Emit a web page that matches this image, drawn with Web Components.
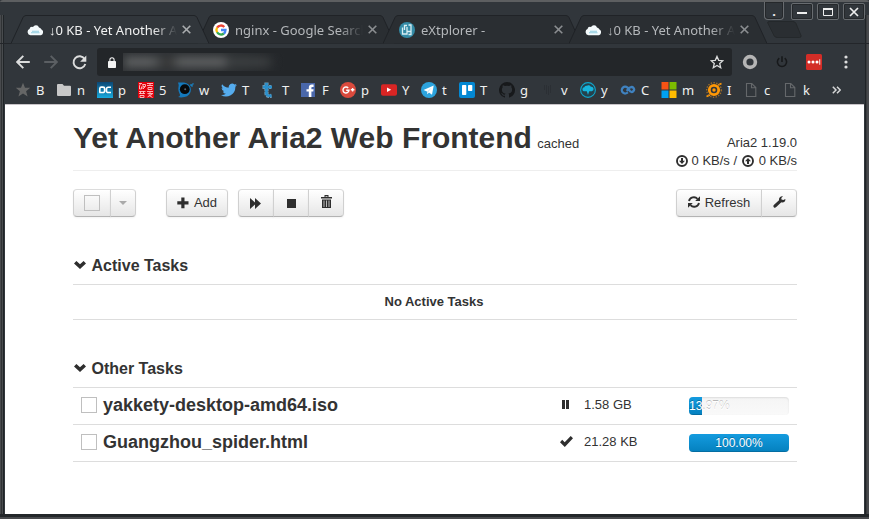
<!DOCTYPE html>
<html lang="en"><head><meta charset="utf-8"><title>Yet Another Aria2 Web Frontend</title>
<style>
html,body{margin:0;width:869px;height:519px;overflow:hidden;background:#31363b}
</style></head><body>
<browser-window></browser-window>
<script>
const G = {
 cloud:`<svg width="16" height="16" viewBox="0 0 16 16"><path d="M3.500 13.200a3.200 3.200 0 0 1-1-6.100A2.800 2.800 0 0 1 6 4.900 3.400 3.400 0 0 1 12 5.400a3.400 3.400 0 0 1 2.500 2 3.200 3.200 0 0 1-.6 5.800z" fill="#f4fafc"/><path d="M4 10.800h8.500M5 9.300h7" stroke="#8fcde0" stroke-width="1.100"/></svg>`,
 google:`<svg width="16" height="16" viewBox="0 0 16 16"><circle cx="8" cy="8" r="8" fill="#fff"/><g fill="none" stroke-width="2.300"><path d="M4.100 5.700A4.500 4.500 0 0 1 11.300 5" stroke="#ea4335"/><path d="M4.100 5.700a4.500 4.500 0 0 0 0 4.600" stroke="#fbbc05"/><path d="M4.100 10.300a4.500 4.500 0 0 0 6.800 1.200" stroke="#34a853"/><path d="M8 8h4.500a4.500 4.500 0 0 1-1.700 3.600" stroke="#4285f4"/></g></svg>`,
 ext:`<svg width="16" height="16" viewBox="0 0 16 16"><circle cx="8" cy="8" r="8" fill="#348ba6"/><path d="M3.500 5.500V12h4.500V9.500M5.500 8V3.500H8M8 5v4.500h4M9.500 3h2.500v9.500H9.500" fill="none" stroke="#d8eef3" stroke-width="1.300"/></svg>`,
 close:`<svg width="9" height="9" viewBox="0 0 9 9"><path d="M.7.7l7.600 7.600M8.300.7L.7 8.300" stroke="currentColor" stroke-width="1.600"/></svg>`,
 back:`<svg width="14" height="14" viewBox="0 0 14 14" fill="none" stroke="#dcdddd" stroke-width="1.900"><path d="M13.800 7H1.500M7.300.8L1.200 7l6.100 6.200"/></svg>`,
 fwd:`<svg width="14" height="14" viewBox="0 0 14 14" fill="none" stroke="#5b5f63" stroke-width="1.900"><path d="M.2 7h12.300M6.700.8L12.800 7l-6.100 6.200"/></svg>`,
 reload:`<svg width="15" height="15" viewBox="0 0 15 15"><path d="M12.600 4A6 6 0 1 0 13.300 9" fill="none" stroke="#dcdddd" stroke-width="1.900"/><path d="M14.300.6v6.200H8.100z" fill="#dcdddd"/></svg>`,
 lock:`<svg width="8" height="11" viewBox="0 0 8 11"><rect y="4" width="8" height="7" rx=".8" fill="#f3f3f3"/><path d="M1.900 4.500V2.800a2.100 2.100 0 0 1 4.200 0v1.700" fill="none" stroke="#f3f3f3" stroke-width="1.100"/></svg>`,
 starline:`<svg width="14" height="14" viewBox="0 0 14 14"><path d="M7 1.400l1.700 3.900 4.200.4-3.200 2.800 1 4.200L7 10.500l-3.700 2.200 1-4.200L1.100 5.700l4.200-.4z" fill="none" stroke="#dcdddd" stroke-width="1.300"/></svg>`,
 ring:`<svg width="16" height="16" viewBox="0 0 16 16"><circle cx="8" cy="8" r="5.400" fill="none" stroke="#b5b5b5" stroke-width="3.600"/></svg>`,
 power:`<svg width="12" height="12" viewBox="0 0 12 12" fill="none" stroke="#17191b" stroke-width="1.600"><path d="M3.300 2.200a4.600 4.600 0 1 0 5.400 0M6 .3V6"/></svg>`,
 lastpass:`<svg width="16" height="16" viewBox="0 0 16 16"><rect width="16" height="16" rx="1.500" fill="#d32d27"/><g fill="#fff"><circle cx="3" cy="8" r="1.500"/><circle cx="7" cy="8" r="1.500"/><circle cx="11" cy="8" r="1.500"/><path d="M13.300 5.300h.9v5.400h-.9z"/></g></svg>`,
 dots:`<svg width="4" height="14" viewBox="0 0 4 14" fill="#dcdddd"><circle cx="2" cy="2" r="1.600"/><circle cx="2" cy="7" r="1.600"/><circle cx="2" cy="12" r="1.600"/></svg>`,
 bstar:`<svg width="16" height="16" viewBox="0 0 16 16"><path d="M8 .7l2 5h5.200l-4.100 3.500 1.500 5.300L8 11.400l-4.600 3.100 1.500-5.300L.8 5.700H6z" fill="#656666"/></svg>`,
 folder:`<svg width="16" height="16" viewBox="0 0 16 16"><path d="M2 2h4.500L8 3.700h6a1 1 0 0 1 1 1V13a1 1 0 0 1-1 1H2a1 1 0 0 1-1-1V3a1 1 0 0 1 1-1z" fill="#c8c8c8"/></svg>`,
 pc:`<svg width="16" height="16" viewBox="0 0 16 16"><defs><linearGradient id="a" x2="0" y2="1"><stop stop-color="#0b4774"/><stop offset="1" stop-color="#18a9dc"/></linearGradient></defs><path d="M0 0h16v16H0z" fill="url(#a)"/><path d="M2.800 10.500V6.500a1.500 1.500 0 0 1 1.500-1.400H6a1.600 1.600 0 0 1 1.600 1.600V9A1.500 1.500 0 0 1 6 10.500H2.300M14 5.300h-2.900A1.600 1.600 0 0 0 9.500 7v2a1.500 1.500 0 0 0 1.600 1.500H14" fill="none" stroke="#fff" stroke-width="1.600"/></svg>`,
 seal:`<svg width="16" height="16" viewBox="0 0 16 16"><path d="M0 0h16v16H0z" fill="#e2000b"/><path d="M1 1.500h3M2.500 1.500L1.500 4v3h2V4.500M5 2v5M4.500 2.500h3v2h-2.500M7 5L5 7M9 1.500h6M9 3.500h6M12 1v2.500M10 5.500h4v2h-4zM1 9.500h6.500M2.500 9v3M5.500 9v3M1 11.500h6M2 13.500h4v2H2zM9 9.500h6M9.500 11.500h5.500M12 10v3M9.500 15l5-3M10.500 13l4 2.500" fill="none" stroke="#ffc4c4" stroke-width=".9"/></svg>`,
 eye0:`<svg width="16" height="16" viewBox="0 0 16 16"><path d="M0 .5h6A7.500 7.300 0 0 1 6.500 15q-3.500.8-6.500 0 3-1 1.500-3.500Q.3 9.500.3 7 1.500 3 0 .5z" fill="#1479bd"/><circle cx="6.800" cy="7.200" r="4.900" fill="#07090b"/><circle cx="7.200" cy="7.200" r="1" fill="#57616b"/><path d="M12.200 3h1.800v1.800M15 1.300v1.200" stroke="#1686cc" stroke-width="1.300" fill="none"/></svg>`,
 twitter:`<svg width="16" height="16" viewBox="0 0 24 24"><path d="M24 4.600a10 10 0 0 1-2.800.8 5 5 0 0 0 2.100-2.700 10 10 0 0 1-3.100 1.200 4.900 4.900 0 0 0-8.400 4.500A14 14 0 0 1 1.700 3.200a4.900 4.900 0 0 0 1.500 6.500 5 5 0 0 1-2.200-.6v.1a4.900 4.900 0 0 0 3.900 4.800 5 5 0 0 1-2.200.1 4.900 4.900 0 0 0 4.600 3.400A10 10 0 0 1 0 19.500 14 14 0 0 0 21.500 7z" fill="#55acee"/></svg>`,
 tt:`<svg width="16" height="16" viewBox="0 0 16 16"><path d="M5.500.5v11q0 3.200 5 2.300M1.500 5h9.500" fill="none" stroke="#6f9db8" stroke-width="4.200" stroke-dasharray="2.500 .7"/><path d="M5.500 1v10.500q0 2.800 5 2M2 5h9" fill="none" stroke="#2a8fcb" stroke-width="2.600"/></svg>`,
 fb:`<svg width="16" height="16" viewBox="0 0 16 16"><rect x="0" y="1" width="14" height="14" fill="#4967aa"/><path d="M7.800 15V9.500H5.500V7.200h2.300V5.900c0-2.200 1.200-3.300 3.100-3.300h1.700v2.300h-1.200c-.8 0-1 .4-1 1v1.300h2.200l-.3 2.300h-1.900V15z" fill="#fff"/></svg>`,
 gplus:`<svg width="16" height="16" viewBox="0 0 16 16"><circle cx="8" cy="8" r="8" fill="#da4a3d"/><path d="M8.200 5.900A3 3 0 1 0 9 8.200H6.200M10.800 7.700h3.600M12.600 5.900v3.600" fill="none" stroke="#fff" stroke-width="1.400"/></svg>`,
 yt:`<svg width="16" height="16" viewBox="0 0 16 16"><rect y="2.200" width="16" height="11.500" rx="2" fill="#d92524"/><path d="M6 5.500v4.600l4.200-2.300z" fill="#fff"/></svg>`,
 tg:`<svg width="16" height="16" viewBox="0 0 16 16"><circle cx="8" cy="8" r="8" fill="#2ca3dd"/><path d="M2.500 8L12.700 3.600 11 12.700 8 10.500l-1.700 1.800L6 9.500z" fill="#fff"/><path d="M6.200 9.400l4.300-3.700-3.200 4.200-1 2.300z" fill="#bcdff1"/></svg>`,
 trello:`<svg width="16" height="16" viewBox="0 0 16 16"><rect width="16" height="16" rx="2" fill="#0388d3"/><rect x="3" y="3" width="4.300" height="10" rx=".7" fill="#fff"/><rect x="9" y="3" width="4.300" height="6" rx=".7" fill="#fff"/></svg>`,
 gh:`<svg width="16" height="16" viewBox="0 0 16 16"><path d="M8 0a8 8 0 0 0-2.500 15.600c.4.100.5-.2.500-.4v-1.500c-2.200.5-2.700-1-2.700-1-.4-.9-.9-1.200-.9-1.200-.7-.5.100-.5.100-.5.800.1 1.200.8 1.200.8.700 1.300 1.900.9 2.300.7.100-.5.300-.9.500-1.100-1.800-.2-3.600-.9-3.600-4 0-.9.300-1.600.8-2.100-.1-.2-.4-1 .1-2.100 0 0 .7-.2 2.200.8a8 8 0 0 1 4 0c1.500-1 2.200-.8 2.200-.8.400 1.100.2 1.900.1 2.100.5.500.8 1.300.8 2.100 0 3.100-1.900 3.700-3.700 3.900.3.300.6.800.6 1.500v2.400c0 .2.100.5.500.4A8 8 0 0 0 8 0z" fill="#17191b"/></svg>`,
 vline:`<svg width="16" height="16" viewBox="0 0 16 16"><path d="M4.500 3v5M6.500 3v9M8.500 4v9M10.500 3v8" stroke="#2b2f34"/></svg>`,
 ycloud:`<svg width="16" height="16" viewBox="0 0 16 16"><circle cx="8" cy="8" r="7.400" fill="#24424d" stroke="#10a5cb" stroke-width="1.100"/><path d="M4.500 9.300a2 2 0 0 1-.2-4 2 2 0 0 1 2.500-1.500 2.600 2.600 0 0 1 4 1 2.300 2.300 0 0 1 1 4.500H9.200L8 13 6.800 9.300z" fill="#17b5dd"/></svg>`,
 inf:`<svg width="16" height="16" viewBox="0 0 16 16"><path d="M7.800 10.300A3.400 3.400 0 1 1 7.300 5.400L10.200 9.400a2.400 2.400 0 1 0 .2-4Q9.200 5.400 6.800 9" fill="none" stroke="#3f82c0" stroke-width="2.300"/></svg>`,
 ms:`<svg width="16" height="16" viewBox="0 0 16 16"><path d="M.5 0h7v7.500h-7z" fill="#f65314"/><path d="M8.500 0h7v7.500h-7z" fill="#7cbb00"/><path d="M.5 8.500h7V16h-7z" fill="#00a1f1"/><path d="M8.500 8.500h7V16h-7z" fill="#ffbb00"/></svg>`,
 eye:`<svg width="16" height="16" viewBox="0 0 16 16"><circle cx="8" cy="8" r="4.700" fill="none" stroke="#ff9806" stroke-width="2.800"/><circle cx="8" cy="8" r="1.700" fill="#ff9806"/><path d="M12 3l3.500-1.500M4 13L.5 14.500" stroke="#ff9806" stroke-width="1.800"/><circle cx="8" cy="8" r="7.300" fill="none" stroke="#a36f29" stroke-width="1.300" stroke-dasharray="1.400 1.400"/></svg>`,
 doc:`<svg width="16" height="16" viewBox="0 0 16 16"><path d="M3.500 1.500h5.300l4 4v9H3.500zM8.500 1.800v4h4" fill="none" stroke="#65686b" stroke-width="1.100"/></svg>`,
 more:`<svg width="9" height="8" viewBox="0 0 9 8"><path d="M.8.8L4 4 .8 7.200M5 .8L8.200 4 5 7.200" fill="none" stroke="#d5d6d7" stroke-width="1.500"/></svg>`,
 chev:`<svg width="12" height="8" viewBox="0 0 12 8"><path d="M0 2.600L2.400.1 6 3.200 9.600.1 12 2.600 6 8z" fill="#2e2e2e"/></svg>`,
 plus:`<svg width="12" height="12" viewBox="0 0 12 12"><path d="M4.300.5h3.200v3.700h4v3.200h-4v3.900H4.300V7.400h-4V4.200h4z" fill="#2e2e2e"/></svg>`,
 ff:`<svg width="11" height="11" viewBox="0 0 11 11"><path d="M0 0l5 4.400V0l6 5.500L5 11V6.600L0 11z" fill="#2e2e2e"/></svg>`,
 stop:`<svg width="9" height="9" viewBox="0 0 9 9"><path d="M0 0h9v9H0z" fill="#2e2e2e"/></svg>`,
 trash:`<svg width="11" height="13" viewBox="0 0 11 13"><path d="M0 2h3.500V0h4v2H11v1.500H0zM1 4.500h9V13H1z" fill="#2e2e2e"/><path d="M4.500 1h2v1h-2zM2.500 5.500h1V12h-1zM5 5.500h1V12H5zM7.500 5.500h1V12h-1z" fill="#bbb"/></svg>`,
 refresh:`<svg width="12" height="12" viewBox="0 0 12 12"><g fill="none" stroke="#2e2e2e" stroke-width="1.900"><path d="M1 5A5 5 0 0 1 9.500 2.800M11 7a5 5 0 0 1-8.500 2.200"/></g><path d="M12 .3V5H7.200zM0 11.700V7h4.800z" fill="#2e2e2e"/></svg>`,
 wrench:`<svg width="13" height="12" viewBox="0 0 13 12"><path d="M12.300 3.100c.5 2.300-1.700 4-4 3.200L3 11.200c-1.500 1.300-3.500-.6-2.200-2.100L6 4.300C5.600 1.800 7.700-.2 10 .3L8.300 2l.2 1.600 1.900.4z" fill="#2e2e2e"/></svg>`,
 down:`<svg width="12" height="12" viewBox="0 0 12 12"><circle cx="6" cy="6" r="5" fill="none" stroke="#2e2e2e" stroke-width="1.900"/><path d="M5 3h2v2.700h2L6 9 3 5.700h2z" fill="#2e2e2e"/></svg>`,
 up:`<svg width="12" height="12" viewBox="0 0 12 12"><circle cx="6" cy="6" r="5" fill="none" stroke="#2e2e2e" stroke-width="1.900"/><path d="M5 9h2V6.300h2L6 3 3 6.300h2z" fill="#2e2e2e"/></svg>`,
 pause:`<svg width="7" height="9" viewBox="0 0 7 9"><path d="M0 0h3v9H0zM4 0h3v9H4z" fill="#2e2e2e"/></svg>`,
 check:`<svg width="13" height="11" viewBox="0 0 13 11"><path d="M0 6.200l2.200-2.400 2.500 2.400L10.700 0 13 2.200 4.800 11z" fill="#2e2e2e"/></svg>`,
 min:`<svg width="22" height="16" viewBox="0 0 22 16"><path d="M6 9h10" stroke="#eee" stroke-width="2"/></svg>`,
 max:`<svg width="22" height="16" viewBox="0 0 22 16"><path d="M6.500 4.500h9v7h-9z" fill="none" stroke="#eee"/><path d="M6 5h10" stroke="#eee" stroke-width="2"/></svg>`,
 x:`<svg width="22" height="16" viewBox="0 0 22 16"><path d="M7 4l8 8M15 4l-8 8" stroke="#eee" stroke-width="1.700"/></svg>`
};
function def(name, fn){
  customElements.define(name, class extends HTMLElement{
    connectedCallback(){ if(!this.shadowRoot) this.attachShadow({mode:'open'}).innerHTML = fn(this); }
  });
}
const A=(e,n,d='')=>e.getAttribute(n)??d;

def('ui-icon', e=>`<style>:host{display:inline-flex;flex:none}svg{display:block}</style>${G[A(e,'name')]}`);

def('browser-tab', e=>{
  const act=e.hasAttribute('active');
  return `<style>
  :host{display:grid;width:198px;height:29px;margin-right:-12px;flex:none;position:relative;z-index:${act?2:1};color:${act?'#f0f1f1':'#b4b7ba'}}
  svg.shape,.row{grid-area:1/1}
  .row{position:relative;display:flex;align-items:center;height:29px;padding-left:16.500px}
  .t{width:128px;margin-left:6px;font:13px/20px "Noto Sans",sans-serif;white-space:nowrap;overflow:hidden;-webkit-mask:linear-gradient(90deg,#000 104px,transparent 128px)}
  .c{margin-left:5px;color:${act?'#a9acae':'#8b8e91'}}
  </style><svg class="shape" width="198" height="29"><path d="M0 28.500L12 2.500Q13 .5 15 .5H183Q185 .5 186 2.500L198 28.500" fill="${act?'#31363b':'#2a2e32'}" stroke="#202327"/></svg>
  <div class="row"><ui-icon name="${A(e,'icon')}"></ui-icon><div class="t"><slot></slot></div><ui-icon class="c" name="close"></ui-icon></div>`});

def('window-controls', e=>`<style>:host{display:flex;gap:4px;color:#eee}
  span{box-sizing:border-box;width:22px;height:17px;border:1px solid #686c70;border-radius:2px;display:flex;justify-content:center;align-items:center;font:bold 13px/12px "Noto Sans",sans-serif;box-shadow:inset 0 0 0 1px #25282b}
  .d{width:20px;height:18px;border-top:0;border-radius:0 0 4px 4px;margin-right:3px;margin-top:-1px}</style>
  <span class="d">.</span><span><ui-icon name="min"></ui-icon></span><span><ui-icon name="max"></ui-icon></span><span><ui-icon name="x"></ui-icon></span>`);

def('tab-strip', e=>`<style>:host{display:flex;padding-left:10.500px;box-sizing:border-box;border-bottom:1px solid #23262a;height:29px}
  .new{margin-left:11px;margin-top:6px}</style>
  <browser-tab active icon="cloud">↓0 KB - Yet Another Aria2</browser-tab><browser-tab icon="google">nginx - Google Search -</browser-tab><browser-tab icon="ext">eXtplorer -</browser-tab><browser-tab icon="cloud">↓0 KB - Yet Another Aria2</browser-tab>
  <svg class="new" width="36" height="18"><path d="M3 .5h24q2 0 3 2l5 12q.5 2-1.500 2H11q-2 0-3-2L2 2.500Q1 .5 3 .5z" fill="#2a2e32" stroke="#24282b"/></svg>`);

def('tool-bar', e=>`<style>:host{display:flex;align-items:center;height:28px;padding:0 18px 0 16px}
  .b{margin-right:14px}.r{margin-right:10px}
  .o{box-sizing:border-box;width:635px;height:28px;border-radius:3px;background:#232629;display:flex;align-items:center;padding:0 8px 0 11px}
  .u{width:162px;height:18px;margin-left:7px;overflow:hidden;background:linear-gradient(90deg,#303336,#2d3033 60%,#232629)}
  .u i{display:block;height:10px;width:150px;margin:4px 0 0 2px;filter:blur(4px);background:linear-gradient(90deg,#5f6162 0 26px,#484a4c 34px,#333 42px,#5f6162 56px 98px,#3c3f41 104px 140px,transparent)}
  .s{margin-left:auto}.e1{margin-left:10px}.e2{margin-left:18px}.e3{margin-left:18px}.e4{margin-left:auto;margin-right:3px}</style>
  <ui-icon class="b" name="back"></ui-icon><ui-icon class="b" name="fwd"></ui-icon><ui-icon class="r" name="reload"></ui-icon>
  <div class="o"><ui-icon name="lock"></ui-icon><div class="u"><i></i></div><ui-icon class="s" name="starline"></ui-icon></div>
  <ui-icon class="e1" name="ring"></ui-icon><ui-icon class="e2" name="power"></ui-icon><ui-icon class="e3" name="lastpass"></ui-icon><ui-icon class="e4" name="dots"></ui-icon>`);

def('book-mark', e=>`<style>:host{display:flex;align-items:center;gap:5px;flex:none;color:#f0f1f1;font:13px/18px "Noto Sans",sans-serif}</style><ui-icon name="${A(e,'icon')}"></ui-icon><slot></slot>`);

const marks=[['bstar','B',41],['folder','n',41],['pc','p',41],['seal','5',40],['eye0','w',43],['twitter','T',40],['tt','T',40],['fb','F',39],['gplus','p',41],['yt','Y',40],['tg','t',38],['trello','T',40],['gh','g',41],['vline','v',40],['ycloud','y',40],['inf','C',41],['ms','m',45],['eye','I',37],['doc','c',39],['doc','k',50]];
def('bookmark-bar', e=>`<style>:host{display:grid;grid-template-columns:${marks.map(m=>m[2]+'px').join(' ')} auto;padding-left:15px;height:28px;align-items:center}
  </style>${marks.map(m=>`<book-mark icon="${m[0]}">${m[1]}</book-mark>`).join('')}<ui-icon name="more"></ui-icon>`);

def('ui-button', e=>`<style>:host{box-sizing:border-box;display:flex;align-items:center;justify-content:center;gap:5px;height:28px;border:1px solid #ccc;border-color:#dcdcdc #d0d0d0 #b3b3b3;background:linear-gradient(#fff,#e6e6e6);color:#333;box-shadow:inset 0 1px 0 #fff,0 1px 2px rgba(0,0,0,.05);font:13px/18px "Liberation Sans",Arial,sans-serif;width:${A(e,'w')}px}
  :host([l]){border-radius:4px 0 0 4px}:host([r]){border-radius:0 4px 4px 0;margin-left:-1px}:host([m]){margin-left:-1px}:host([l][r]){border-radius:4px;margin-left:0}</style><slot></slot>`);
def('check-box', e=>`<style>:host{display:block;box-sizing:border-box;width:16px;height:16px;border:1px solid #bfbfbf;flex:none}</style>`);

def('page-header', e=>`<style>:host{display:flex;justify-content:space-between;box-sizing:border-box;height:52px;border-bottom:1px solid #eee;color:#333;font:13px/18px "Liberation Sans",Arial,sans-serif}
  h1{margin:1px 0 0;font-size:30px;line-height:36px}h1 small{font-size:13px;font-weight:400;margin-left:-3px}
  .s{padding-top:15px;text-align:right}.s div{display:flex;justify-content:flex-end;align-items:center;height:18px;white-space:pre}ui-icon{margin-right:4px;margin-top:-1px}.u{margin:-1px 5px 0 1px}</style>
  <h1>Yet Another Aria2 Web Frontend <small>cached</small></h1>
  <div class="s"><div>Aria2 1.19.0</div><div><ui-icon name="down"></ui-icon>0 KB/s / <ui-icon class="u" name="up"></ui-icon>0 KB/s</div></div>`);

def('action-bar', e=>`<style>:host{display:flex;height:28px;margin-top:18px}.g{display:flex}.g1{margin-right:30px}.g2{margin-right:10px}.g4{margin-left:auto}
  .k{border:4px solid transparent;border-top-color:#aaa;border-bottom:0}.f{margin-right:2px}.tr{margin-top:-3px}.rf{margin-top:-2px}.wr{margin-top:-2px}</style>
  <div class="g g1"><ui-button l w="38"><check-box></check-box></ui-button><ui-button r w="26"><i class="k"></i></ui-button></div>
  <div class="g g2"><ui-button l r w="62"><ui-icon name="plus"></ui-icon>Add</ui-button></div>
  <div class="g"><ui-button l w="36"><ui-icon class="f" name="ff"></ui-icon></ui-button><ui-button m w="36"><ui-icon name="stop"></ui-icon></ui-button><ui-button r w="36"><ui-icon class="tr" name="trash"></ui-icon></ui-button></div>
  <div class="g g4"><ui-button l w="86"><ui-icon class="rf" name="refresh"></ui-icon>Refresh</ui-button><ui-button r w="36"><ui-icon class="wr" name="wrench"></ui-icon></ui-button></div>`);

def('task-section', e=>`<style>:host{display:block;color:#333;font-family:"Liberation Sans",Arial,sans-serif}
  h3{display:flex;align-items:center;gap:6px;margin:0;height:36px;font-size:16px;line-height:18px;padding-left:.5px}h3 ui-icon{margin-top:-2px}
  .b{border-bottom:1px solid #ddd}</style><h3><ui-icon name="chev"></ui-icon>${A(e,'label')}</h3><div class="b"><slot></slot></div>`);
def('empty-row', e=>`<style>:host{display:block;box-sizing:border-box;height:35px;padding-right:2px;border-top:1px solid #ddd;text-align:center;font:bold 13px/33px "Liberation Sans",Arial,sans-serif}</style><slot></slot>`);
def('progress-bar', e=>{const v=+A(e,'value');return `<style>:host{position:relative;display:block;width:100px;height:18px;border-radius:4px;overflow:hidden;background:linear-gradient(#f5f5f5,#f9f9f9);box-shadow:inset 0 1px 2px rgba(0,0,0,.1);color:#fff;font:12px/18px "Liberation Sans",Arial,sans-serif;text-shadow:0 -1px 0 rgba(0,0,0,.25)}
  .f{width:${Math.floor(v)}%;height:18px;background:linear-gradient(#149bdf,#0480be);box-shadow:inset 0 -1px 0 rgba(0,0,0,.15)}
  .t{position:absolute;top:0;left:0;${v>50?'width:100%;text-align:center':''}}</style><div class="f"></div><div class="t">${v.toFixed(2)}%</div>`});
def('task-row', e=>`<style>:host{display:grid;grid-template-columns:22px 458px 23px 105px 100px;align-items:center;box-sizing:border-box;height:37px;padding:0 8px 2px;border-top:1px solid #ddd;font:13px/18px "Liberation Sans",Arial,sans-serif}
  b{font-size:18px}.i{display:flex;justify-content:center;width:13px;margin-left:-1px;margin-top:-1px}.p{width:11px}progress-bar{margin-top:1px}</style>
  <check-box></check-box><b>${A(e,'name')}</b><span class="i ${A(e,'state')=='pause'?'p':''}"><ui-icon name="${A(e,'state')}"></ui-icon></span><span>${A(e,'size')}</span><progress-bar value="${A(e,'value')}"></progress-bar>`);

def('aria-page', e=>`<style>:host{display:block;box-sizing:border-box;width:859px;height:410px;background:#fff;margin-left:5px;padding:14px 67px 0 68px;border-top:1px solid #c8c4c8}
  .a{margin-top:31px}.o{margin-top:31px}</style>
  <page-header></page-header><action-bar></action-bar>
  <task-section class="a" label="Active Tasks"><empty-row>No Active Tasks</empty-row></task-section>
  <task-section class="o" label="Other Tasks"><task-row name="yakkety-desktop-amd64.iso" state="pause" size="1.58 GB" value="13.97"></task-row><task-row name="Guangzhou_spider.html" state="check" size="21.28 KB" value="100"></task-row></task-section>`);

def('browser-window', e=>`<style>:host{display:block;position:relative;box-sizing:border-box;width:869px;height:519px;background:linear-gradient(90deg,#484a4d 1px,#303335 1px 2px,#484b4e 2px 3px,#202427 3px 4px,#31363b 4px 865px,#202427 865px 866px,#3a3c3f 866px 867px,#484a4d 867px);border-radius:3px 3px 0 0;overflow:hidden}
  .top{height:15px;box-sizing:border-box;border-top:2px solid #5d5f61;background:#31363b}
  window-controls{position:absolute;top:3px;right:4px}
  tool-bar{margin-top:4px}
  .foot{height:5px;background:linear-gradient(#23272a 3px,#484a4d 3px)}</style>
  <div class="top"></div><tab-strip></tab-strip><tool-bar></tool-bar><bookmark-bar></bookmark-bar><aria-page></aria-page><div class="foot"></div><window-controls></window-controls>`);
</script></body></html>
